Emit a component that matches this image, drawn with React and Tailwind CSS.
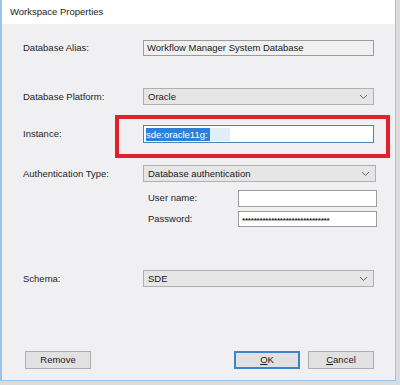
import React from 'react'

const font = { fontFamily: '"Liberation Sans", Arial, sans-serif' }

function Chevron() {
  return (
    <svg width="9" height="6" viewBox="0 0 9 6" className="shrink-0">
      <path d="M1 1 L4.5 4.5 L8 1" fill="none" stroke="#666" strokeWidth="1" />
    </svg>
  )
}

function Select({ value, className = 'w-[231px]' }) {
  return (
    <div className={`h-[17px] flex items-center justify-between pl-[4px] pr-[5px] bg-[#e6e6e6] border border-[#b0b0b0] ${className}`}>
      <span className="text-[9.5px] text-[#1a1a1a] leading-none">{value}</span>
      <Chevron />
    </div>
  )
}

function Label({ children }) {
  return <div className="w-[120px] text-[9.5px] text-[#1e1e1e] leading-none">{children}</div>
}

function Button({ children, primary }) {
  return (
    <div
      className={`w-[66px] h-[18px] flex items-center justify-center text-[9.5px] text-[#1a1a1a] bg-[#e1e1e1] ${
        primary ? 'border-2 border-[#3c85c8]' : 'border border-[#adadad]'
      }`}
    >
      {children}
    </div>
  )
}

export default function App() {
  return (
    <div className="relative w-[400px] h-[385px] bg-[#dcdcdc] overflow-hidden" style={font}>
      <div className="w-[396px] h-[381px] flex flex-col border-l-2 border-r border-b border-[#9cc3e6] bg-[#f0eff2]">
        {/* title bar */}
        <div className="h-[24px] bg-white flex items-center pl-[8px] shrink-0">
          <span className="text-[9.5px] text-[#222]">Workspace Properties</span>
        </div>

        <div className="flex flex-col pl-[21px]">
          {/* alias */}
          <div className="flex items-center mt-[16px] h-[16px]">
            <Label>Database Alias:</Label>
            <div className="w-[231px] h-[16px] flex items-center pl-[3px] bg-[#f0f0f0] border border-[#9c9c9c]">
              <span className="text-[9.5px] text-[#1a1a1a] leading-none">Workflow Manager System Database</span>
            </div>
          </div>

          {/* platform */}
          <div className="flex items-center mt-[32px]">
            <Label>Database Platform:</Label>
            <Select value="Oracle" />
          </div>

          {/* instance */}
          <div className="flex items-center mt-[20px] h-[18px]">
            <Label>Instance:</Label>
            <div className="w-[231px] h-[18px] flex items-center pl-[2px] bg-white border border-[#4a83b5]">
              <span className="bg-[#2e7fd6] text-white text-[9.5px] leading-[13px] pr-[2px]">sde:oracle11g:</span>
              <span className="w-[20px] h-[13px] bg-[#9fc3e8] opacity-30"></span>
            </div>
          </div>

          {/* auth */}
          <div className="flex items-center mt-[22px]">
            <Label>Authentication Type:</Label>
            <Select value="Database authentication" className="w-[233px]" />
          </div>

          {/* user */}
          <div className="flex items-center mt-[8px] h-[17px]">
            <div className="w-[125px]"></div>
            <div className="w-[90px] text-[9.5px] text-[#1e1e1e]">User name:</div>
            <div className="w-[139px] h-[17px] bg-white border border-[#9c9c9c]"></div>
          </div>

          {/* password */}
          <div className="flex items-center mt-[4px] h-[16px]">
            <div className="w-[125px]"></div>
            <div className="w-[90px] text-[9.5px] text-[#1e1e1e]">Password:</div>
            <div className="w-[139px] h-[16px] flex items-center pl-[3px] bg-white border border-[#9c9c9c]">
              <span className="text-[8px] tracking-[-0.2px] text-[#222] font-bold leading-none pt-[3px]">******************************</span>
            </div>
          </div>

          {/* schema */}
          <div className="flex items-center mt-[43px]">
            <Label>Schema:</Label>
            <Select value="SDE" />
          </div>

          {/* buttons */}
          <div className="flex items-center mt-[64px] pl-[2px]">
            <Button>Remove</Button>
            <div className="flex-1"></div>
            <div className="flex gap-[8px] pr-[21px]">
              <Button primary>
                <span><span className="underline">O</span>K</span>
              </Button>
              <Button>
                <span><span className="underline">C</span>ancel</span>
              </Button>
            </div>
          </div>
        </div>
      </div>

      {/* red highlight annotation */}
      <div className="absolute left-[115px] top-[115px] w-[275px] h-[43px] border-[4px] border-[#e0202c]"></div>
    </div>
  )
}
